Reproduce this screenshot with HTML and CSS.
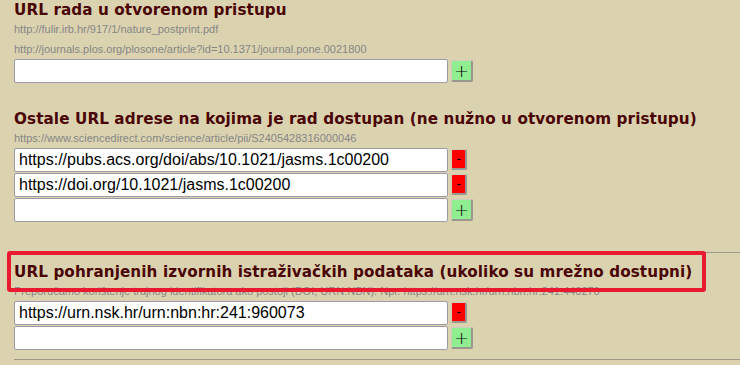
FILE: index.html
```html
<!DOCTYPE html>
<html lang="hr">
<head>
    <meta charset="UTF-8" />
    <meta name="viewport" content="width=device-width, initial-scale=1.0"/>
    <title>URL adrese rada</title>
    <link rel="stylesheet" href="styles.css">
</head>
<body>
    <div class="group group-first">
        <div class="field">
            <h3>URL rada u otvorenom pristupu</h3>
            <div class="hint">http://fulir.irb.hr/917/1/nature_postprint.pdf</div>
            <div class="hint">http://journals.plos.org/plosone/article?id=10.1371/journal.pone.0021800</div>
            <div class="row">
                <input type="text" value="" />
                <button class="btn add">+</button>
            </div>
        </div>

        <div class="field">
            <h3>Ostale URL adrese na kojima je rad dostupan (ne nužno u otvorenom pristupu)</h3>
            <div class="hint">https://www.sciencedirect.com/science/article/pii/S2405428316000046</div>
            <div class="row">
                <input type="text" value="https://pubs.acs.org/doi/abs/10.1021/jasms.1c00200" />
                <button class="btn remove">-</button>
            </div>
            <div class="row">
                <input type="text" value="https://doi.org/10.1021/jasms.1c00200" />
                <button class="btn remove">-</button>
            </div>
            <div class="row">
                <input type="text" value="" />
                <button class="btn add">+</button>
            </div>
        </div>
    </div>

    <div class="group">
        <div class="highlight"></div>
        <div class="field">
            <h3>URL pohranjenih izvornih istraživačkih podataka (ukoliko su mrežno dostupni)</h3>
            <div class="hint">Preporučamo korištenje trajnog identifikatora ako postoji (DOI, URN:NBN). Npr. https://urn.nsk.hr/urn:nbn:hr:241:440270</div>
            <div class="row">
                <input type="text" value="https://urn.nsk.hr/urn:nbn:hr:241:960073" />
                <button class="btn remove">-</button>
            </div>
            <div class="row">
                <input type="text" value="" />
                <button class="btn add">+</button>
            </div>
        </div>
    </div>
</body>
</html>
```

FILE: styles.css
```css
* {
    margin: 0;
    padding: 0;
    box-sizing: border-box;
}

body {
    font-family: 'Liberation Sans', Arial, sans-serif;
    background-color: #dbd3b0;
    padding: 1px 0 0 14px;
    overflow: hidden;
}

.group {
    position: relative;
    border-bottom: 1px solid #9d988a;
    padding: 10px 0 8px;
    width: 740px;
}

.group-first {
    padding: 0 0 29px;
}

.field + .field {
    margin-top: 27px;
}

.field h3 {
    font-family: 'DejaVu Sans', Verdana, sans-serif;
    font-size: 15.2px;
    font-weight: bold;
    letter-spacing: 0.1px;
    line-height: 18px;
    color: #4a0404;
}

.hint {
    font-size: 11px;
    line-height: 20px;
    color: #868686;
    white-space: nowrap;
}

.row {
    display: flex;
    align-items: flex-start;
    gap: 3px;
    margin-bottom: 1px;
}

.row input {
    width: 434px;
    height: 24px;
    padding: 0 4px;
    border: 1px solid #9b9aa6;
    border-radius: 2px;
    background: #fff;
    font-family: 'Liberation Sans', Arial, sans-serif;
    font-size: 16px;
    color: #000;
}

.btn {
    height: 22px;
    margin-top: 1px;
    border: 1px solid #cfcbbd;
    border-right: 2px solid #9a978f;
    border-bottom: 2px solid #9a978f;
    border-radius: 2px;
    font-family: 'DejaVu Sans', sans-serif;
    color: #000;
    cursor: pointer;
}

.add {
    width: 22px;
    background-color: #90ee90;
    font-size: 18px;
    font-weight: 300;
    line-height: 16px;
}

.remove {
    width: 16px;
    height: 21px;
    background-color: #ff0000;
    font-size: 13px;
    line-height: 16px;
}

/* oznaka preko naslova */
.highlight {
    position: absolute;
    top: -2px;
    left: -7px;
    width: 699px;
    height: 41px;
    border: 4px solid #e9192f;
    border-radius: 3px;
}
```
